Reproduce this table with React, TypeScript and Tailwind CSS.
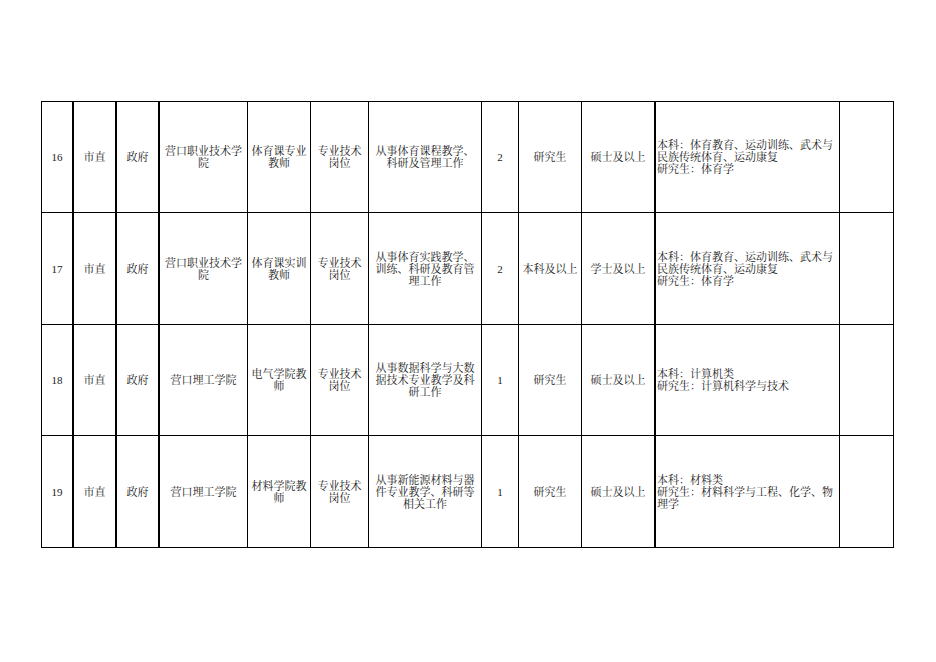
import React from 'react';

type Row = {
  no: string;
  level: string;
  kind: string;
  unit: string[];
  post: string[];
  type: string[];
  duty: string[];
  count: string;
  edu: string;
  degree: string;
  major: string[];
};

const rows: Row[] = [
  {
    no: '16',
    level: '市直',
    kind: '政府',
    unit: ['营口职业技术学', '院'],
    post: ['体育课专业', '教师'],
    type: ['专业技术', '岗位'],
    duty: ['从事体育课程教学、', '科研及管理工作'],
    count: '2',
    edu: '研究生',
    degree: '硕士及以上',
    major: ['本科：体育教育、运动训练、武术与', '民族传统体育、运动康复', '研究生：体育学'],
  },
  {
    no: '17',
    level: '市直',
    kind: '政府',
    unit: ['营口职业技术学', '院'],
    post: ['体育课实训', '教师'],
    type: ['专业技术', '岗位'],
    duty: ['从事体育实践教学、', '训练、科研及教育管', '理工作'],
    count: '2',
    edu: '本科及以上',
    degree: '学士及以上',
    major: ['本科：体育教育、运动训练、武术与', '民族传统体育、运动康复', '研究生：体育学'],
  },
  {
    no: '18',
    level: '市直',
    kind: '政府',
    unit: ['营口理工学院'],
    post: ['电气学院教', '师'],
    type: ['专业技术', '岗位'],
    duty: ['从事数据科学与大数', '据技术专业教学及科', '研工作'],
    count: '1',
    edu: '研究生',
    degree: '硕士及以上',
    major: ['本科：计算机类', '研究生：计算机科学与技术'],
  },
  {
    no: '19',
    level: '市直',
    kind: '政府',
    unit: ['营口理工学院'],
    post: ['材料学院教', '师'],
    type: ['专业技术', '岗位'],
    duty: ['从事新能源材料与器', '件专业教学、科研等', '相关工作'],
    count: '1',
    edu: '研究生',
    degree: '硕士及以上',
    major: ['本科：材料类', '研究生：材料科学与工程、化学、物', '理学'],
  },
];

function Lines({ lines }: { lines: string[] }) {
  return (
    <>
      {lines.map((l, i) => (
        <span key={i} className="block whitespace-nowrap">
          {l}
        </span>
      ))}
    </>
  );
}

const cell = 'flex items-center justify-center text-center border-t border-black';

export default function App() {
  return (
    <div
      className="w-[936px] h-[662px] bg-white pt-[101px] pl-[41px] text-[11px] leading-[12px] text-[#1a1a1a]"
      style={{ fontFamily: "'Liberation Serif', 'Noto Serif CJK SC', 'Noto Sans CJK SC', serif" }}
    >
      <div className="w-[853px] border-b border-black grid grid-cols-[31px_43px_43px_89px_63px_58px_113px_37px_63px_73px_185px_55px]">
        {rows.map((r, idx) => {
          const h = idx % 2 === 0 ? 'h-[111px]' : 'h-[112px]';
          return (
            <React.Fragment key={r.no}>
              <div className={`${cell} ${h} border-l`}>{r.no}</div>
              <div className={`${cell} ${h} border-l-2`}>{r.level}</div>
              <div className={`${cell} ${h} border-l-2`}>{r.kind}</div>
              <div className={`${cell} ${h} border-l-2`}>
                <div>
                  <Lines lines={r.unit} />
                </div>
              </div>
              <div className={`${cell} ${h} border-l`}>
                <div>
                  <Lines lines={r.post} />
                </div>
              </div>
              <div className={`${cell} ${h} border-l`}>
                <div>
                  <Lines lines={r.type} />
                </div>
              </div>
              <div className={`${cell} ${h} border-l`}>
                <div>
                  <Lines lines={r.duty} />
                </div>
              </div>
              <div className={`${cell} ${h} border-l`}>{r.count}</div>
              <div className={`${cell} ${h} border-l`}>{r.edu}</div>
              <div className={`${cell} ${h} border-l`}>{r.degree}</div>
              <div className={`flex items-center border-t border-black border-l-2 pl-[1px] ${h}`}>
                <div>
                  <Lines lines={r.major} />
                </div>
              </div>
              <div className={`border-t border-l border-r border-black ${h}`} />
            </React.Fragment>
          );
        })}
      </div>
    </div>
  );
}
